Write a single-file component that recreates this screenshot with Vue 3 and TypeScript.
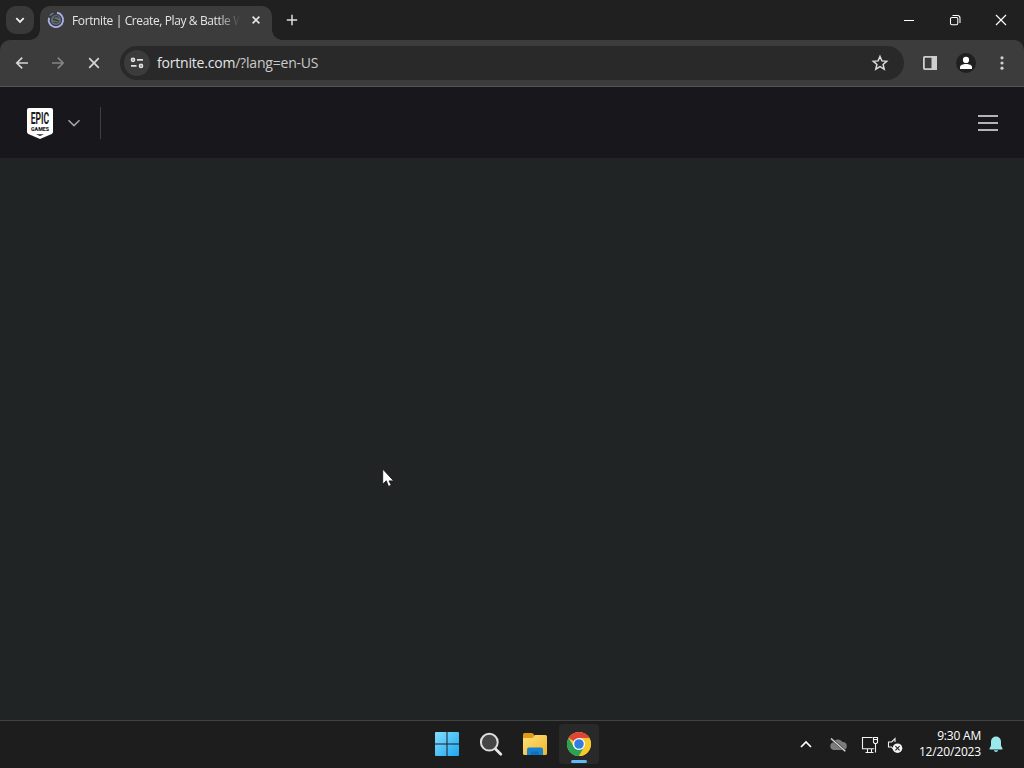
<script setup lang="ts">
import { ref } from 'vue'

const tabTitle = ref<string>('Fortnite | Create, Play & Battle W')
const host = ref<string>('fortnite.com')
const path = ref<string>('/?lang=en-US')
const time = ref<string>('9:30 AM')
const date = ref<string>('12/20/2023')
</script>

<template>
  <div class="desktop">
    <header class="tabstrip">
      <button class="tab-search" aria-label="Search tabs">
        <svg width="28" height="28" viewBox="0 0 28 28"><path d="M10.3 12.2 14 15.9l3.7-3.7" fill="none" stroke="#eee" stroke-width="1.8" /></svg>
      </button>
      <div class="tab">
        <svg class="favicon" width="18" height="18" viewBox="0 0 18 18">
          <circle cx="9" cy="9" r="5" fill="#656d75" />
          <path d="M11.800 6.500c-2.200-1.600-5-.8-5 1 0 2 4.800 1 4.600 3-.1 1.800-3.400 1.800-5 .4M6 8.500l5.700 1.300" fill="none" stroke="#30363a" stroke-width="1" />
          <path d="M10 1.800A7.200 7.200 0 1 1 2 6.800" fill="none" stroke="#a7b1ea" stroke-width="1.900" />
          <path d="M3 4.600Q4.500 2.700 6.500 2.100" fill="none" stroke="#747b9b" stroke-width="1.500" />
        </svg>
        <span class="tab-title">{{ tabTitle }}</span>
        <button class="tab-close" aria-label="Close tab">
          <svg width="16" height="16" viewBox="0 0 16 16"><path d="m4.600 4.600 6.800 6.800m0-6.800-6.800 6.800" stroke="#e4e4e4" stroke-width="1.600" /></svg>
        </button>
      </div>
      <button class="new-tab" aria-label="New tab">
        <svg width="20" height="20" viewBox="0 0 20 20"><path d="M10 4.800v10.400M4.800 10h10.400" stroke="#ddd" stroke-width="1.500" /></svg>
      </button>
      <div class="window-controls">
        <svg width="46" height="40" viewBox="0 0 46 40"><path d="M18 20.500h10" stroke="#fff" /></svg>
        <svg width="46" height="40" viewBox="0 0 46 40" fill="none" stroke="#fff" stroke-width="1.050"><rect x="18.500" y="17.500" width="7.300" height="7.300" rx="1.300" /><path d="M20.500 15.500h4.800a2.700 2.700 0 0 1 2.700 2.700v4.700" /></svg>
        <svg width="46" height="40" viewBox="0 0 46 40"><path d="m18 15 10 10m0-10L18 25" stroke="#fff" stroke-width="1.150" /></svg>
      </div>
    </header>

    <div class="toolbar-back">
      <nav class="toolbar">
        <svg width="36" height="36" viewBox="0 0 36 36" fill="none" stroke="#d5d5d5" stroke-width="1.700"><path d="M24 18H13m5.200-5.400L12.800 18l5.400 5.400" /></svg>
        <svg width="36" height="36" viewBox="0 0 36 36" fill="none" stroke="#858585" stroke-width="1.600"><path d="M12 18h11m-5.200-5.400 5.400 5.400-5.400 5.400" /></svg>
        <svg width="36" height="36" viewBox="0 0 36 36" fill="none" stroke="#d5d5d5" stroke-width="1.700"><path d="m13.200 13.200 9.600 9.600m0-9.600-9.600 9.600" /></svg>
        <div class="omnibox">
          <span class="site-info">
            <svg width="26" height="26" viewBox="0 0 26 26" fill="none" stroke="#e0e0e0" stroke-width="1.700"><circle cx="9" cy="9.800" r="1.500" /><path d="M13 9.800h6M7 15.900h5.500" /><circle cx="17" cy="15.900" r="1.500" /></svg>
          </span>
          <span class="url"><span class="host">{{ host }}</span>{{ path }}</span>
          <svg class="star" width="20" height="20" viewBox="0 0 20 20"><path d="m10 3.500 1.900 4.400 4.800.4-3.600 3.200 1.100 4.700L10 13.700l-4.200 2.500 1.100-4.700-3.600-3.200 4.800-.4Z" fill="none" stroke="#ddd" stroke-width="1.500" /></svg>
        </div>
        <svg width="36" height="36" viewBox="0 0 36 36"><rect x="11.900" y="11.900" width="12.200" height="12.200" rx=".8" fill="none" stroke="#cfcfcf" stroke-width="1.800" /><path d="M19.500 11h5.500v14h-5.500z" fill="#cfcfcf" /></svg>
        <svg width="36" height="36" viewBox="0 0 36 36"><circle cx="18" cy="18" r="10" fill="#202020" /><circle cx="18" cy="14.900" r="3.100" fill="#fff" /><path d="M12 24v-1.700c0-2.100 3-3.200 6-3.200s6 1.100 6 3.200V24Z" fill="#fff" /></svg>
        <svg width="36" height="36" viewBox="0 0 36 36" fill="#cfcfcf"><circle cx="18" cy="12.800" r="1.600" /><circle cx="18" cy="18" r="1.600" /><circle cx="18" cy="23.200" r="1.600" /></svg>
      </nav>
    </div>

    <section class="site-header">
      <svg class="epic" width="26" height="31" viewBox="0 0 26 31">
        <path d="M2 0h22q2 0 2 2v21.800q0 1.500-1.300 2.100L13 31 1.300 25.900Q0 25.300 0 23.800V2q0-2 2-2Z" fill="#fff" />
        <text class="epic-name" x="3.700" y="16" textLength="18.400" lengthAdjust="spacingAndGlyphs">EPIC</text>
        <text class="games-name" x="4" y="22.600" textLength="18" lengthAdjust="spacingAndGlyphs">GAMES</text>
        <path d="M9 26.200h8l-4 1.700Z" fill="#222" />
      </svg>
      <svg class="chevron" width="14" height="10" viewBox="0 0 14 10"><path d="m1.500 2.200 5.500 5.400 5.500-5.400" fill="none" stroke="#a5a5a8" stroke-width="1.500" /></svg>
      <span class="divider"></span>
      <button class="menu" aria-label="Menu"><span></span><span></span><span></span></button>
    </section>

    <main class="page"></main>

    <footer class="taskbar">
      <div class="apps">
        <div class="app">
          <svg width="40" height="40" viewBox="0 0 40 40">
            <defs><linearGradient id="win" x1="8" y1="8" x2="32" y2="32" gradientUnits="userSpaceOnUse"><stop stop-color="#83ddff" /><stop offset="1" stop-color="#1ca7ee" /></linearGradient></defs>
            <path d="M9 8h10.500v11.500H8V9q0-1 1-1Zm11.500 0H31q1 0 1 1v10.500H20.500ZM8 20.500h11.500V32H9q-1 0-1-1Zm12.500 0H32V31q0 1-1 1H20.500Z" fill="url(#win)" />
          </svg>
        </div>
        <div class="app">
          <svg width="40" height="40" viewBox="0 0 40 40"><path d="m24.500 25 5.300 5.300" stroke="#e7e7e7" stroke-width="2.800" stroke-linecap="round" /><circle cx="18.300" cy="18.200" r="8.400" fill="#454545" stroke="#ddd" stroke-width="2" /></svg>
        </div>
        <div class="app">
          <svg width="40" height="40" viewBox="0 0 40 40">
            <defs><linearGradient id="folder" x1="0" y1="0" x2="1" y2="1"><stop stop-color="#ffe27b" /><stop offset="1" stop-color="#efb52c" /></linearGradient></defs>
            <path d="M8 10.500Q8 9 9.500 9h7q1 0 1.700.8L20 12l-4 4H8Z" fill="#df9d16" />
            <path d="M8 14h8.500q1 0 1.700-.7L20 11h10.500q1.500 0 1.500 1.500v17q0 1.500-1.500 1.500h-21Q8 31 8 29.500Z" fill="url(#folder)" />
            <path d="M12 31v-5.500q0-2 2-2h12q2 0 2 2V31Z" fill="#1681cf" /><path d="M16 31v-2.200q0-1.300 1.300-1.300h5.400q1.300 0 1.300 1.300V31Z" fill="#0f70bd" />
          </svg>
        </div>
        <div class="app active">
          <svg width="40" height="40" viewBox="0 0 40 40">
            <circle cx="20" cy="20" r="12" fill="#f8c92d" />
            <path d="M20 20 9.600 14A12 12 0 0 1 30.400 14Z" fill="#df4537" />
            <path d="M9.600 14A12 12 0 0 0 20 32L25.200 23 20 20 14.800 23Z" fill="#2aa255" />
            <path d="M20 14h10.400A12 12 0 0 1 20 32l5.200-9Z" fill="#f8c92d" />
            <circle cx="20" cy="20" r="6.100" fill="#fff" /><circle cx="20" cy="20" r="4.800" fill="#347de0" />
          </svg>
          <span class="indicator"></span>
        </div>
      </div>
      <div class="tray">
        <svg width="32" height="40" viewBox="0 0 32 40"><path d="m11 22 5-5 5 5" fill="none" stroke="#fff" stroke-width="1.700" /></svg>
        <svg width="32" height="40" viewBox="0 0 32 40"><path d="M11.500 25a3.900 3.900 0 0 1-.4-7.600 5.500 5.500 0 0 1 9.400-.4A4 4 0 0 1 21 25Z" fill="#7c7c7c" /><path d="m9 13.500 14.300 12.700" stroke="#3d3d3d" stroke-width="2.400" /><path d="m9 13.500 14.300 12.700" stroke="#d8d8d8" stroke-width="1.200" /></svg>
        <svg width="32" height="40" viewBox="0 0 32 40" fill="none" stroke="#f3f3f3" stroke-width="1.100"><path d="M18.500 12.500h-10v11.200h11.700M11.500 27.500h8m-6-4v4m4-4v4M19.500 12.500h4v5l-1 1h-2l-1-1Zm2 6v9M19.500 14.500h4" /></svg>
        <svg class="sound" width="20" height="40" viewBox="0 0 20 40"><path d="M10 17v-3.400L6.700 17H3.500v5h3l3 3.600" fill="none" stroke="#eee" stroke-width="1.100" /><circle cx="12.500" cy="23.200" r="4.800" fill="#f4f4f4" /><path d="m10.400 21.100 4.200 4.200m0-4.200-4.200 4.200" stroke="#222" stroke-width="1.100" /></svg>
        <div class="clock"><span class="time">{{ time }}</span><span class="date">{{ date }}</span></div>
        <svg class="bell" width="14" height="17" viewBox="0 0 14 17"><path d="M7 .5a5 5 0 0 1 5 5v4l1.500 3q.4.900-.7.900H1.200q-1.100 0-.7-.9l1.500-3v-4a5 5 0 0 1 5-5ZM4.800 14.300h4.400Q8.700 16 7 16t-2.200-1.700Z" fill="#9be8ed" /></svg>
      </div>
    </footer>

    <svg class="cursor" width="14" height="20" viewBox="0 0 14 20"><path d="M.7 1v15.200l3.600-3.400 2.200 5.600 2.800-1.200L7 12.900h4.700Z" fill="#fff" stroke="#111" stroke-width=".8" /></svg>
  </div>
</template>

<style>
body { margin: 0; background: #212424; }
</style>

<style scoped>
* { box-sizing: border-box; }
svg { display: block; flex: none; }
button { display: flex; border: 0; padding: 0; background: none; }
.desktop { position: relative; display: flex; flex-direction: column; width: 1024px; height: 768px; overflow: hidden; background: #212424; font-family: "Open Sans", "Noto Sans", sans-serif; }
.tabstrip { display: flex; height: 40px; background: #1f201f; padding-left: 6px; }
.tab-search { width: 28px; height: 28px; margin-top: 6px; border-radius: 10px; background: #393939; }
.tab { position: relative; display: flex; align-items: center; width: 232px; height: 34px; margin: 6px 0 0 6px; padding: 0 8px 6px 7px; border-radius: 10px 10px 0 0; background: #3c3c3c; }
.tab::before, .tab::after { content: ""; position: absolute; bottom: 0; width: 10px; height: 10px; }
.tab::before { left: -10px; background: radial-gradient(circle at 0 0, transparent 9.500px, #3c3c3c 10px); }
.tab::after { right: -10px; background: radial-gradient(circle at 100% 0, transparent 9.500px, #3c3c3c 10px); }
.tab-title { width: 169px; margin-left: 7px; padding-top: 2px; white-space: nowrap; color: #e5e5e5; font-size: 12px; line-height: 20px; letter-spacing: -.38px; mask-image: linear-gradient(90deg, #000 146px, transparent 168px); }
.tab-close { margin-left: auto; }
.new-tab { margin: 10px 0 0 10px; }
.window-controls { display: flex; margin-left: auto; }
.toolbar-back { height: 47px; background: #1f201f; }
.toolbar { display: flex; align-items: center; height: 47px; padding: 0 4px; border-radius: 10px 10px 0 0; background: #3c3c3c; border-bottom: 1px solid #555; }
.omnibox { display: flex; align-items: center; width: 784px; height: 34px; margin: 0 8px; padding: 0 14px 0 4px; border-radius: 17px; background: #292929; }
.site-info { display: flex; align-items: center; justify-content: center; width: 26px; height: 26px; border-radius: 50%; background: #3b3b3b; }
.url { margin-left: 7px; color: #c9c9c9; font-size: 14px; line-height: 24px; letter-spacing: -.2px; white-space: nowrap; }
.host { color: #e5e5e5; }
.star { margin-left: auto; }
.site-header { display: flex; align-items: center; height: 71px; padding: 0 26px 0 27px; background: #18181c; }
.epic { margin-top: 2px; }
.epic-name { font: 700 17px "Roboto", sans-serif; fill: #1b1b1b; }
.games-name { font: 900 5.500px "Roboto", sans-serif; fill: #1b1b1b; }
.chevron { margin-left: 14px; margin-top: 1px; }
.divider { width: 1px; height: 32px; margin-left: 19px; background: #414144; }
.menu { flex-direction: column; gap: 5px; width: 20px; margin-left: auto; padding-top: 1px; }
.menu span { width: 20px; height: 2px; background: #b4b4b7; }
.page { flex: 1; background: #212424; }
.taskbar { display: grid; grid-template-columns: 176px 424px; justify-content: end; height: 48px; border-top: 1px solid #414343; background: #1d1d1d; }
.apps { display: flex; gap: 4px; padding: 3px 0 0 3px; }
.app { display: flex; flex-direction: column; flex: none; width: 40px; height: 40px; }
.active { position: relative; border-radius: 4px; background: #292929; }
.indicator { position: absolute; bottom: 1px; left: 12px; width: 16px; height: 3px; border-radius: 2px; background: #60b8f4; }
.tray { display: flex; align-items: center; padding-left: 190px; }
.sound { margin-left: -1px; }
.clock { display: flex; flex-direction: column; align-items: flex-end; width: 76px; margin-top: -2px; color: #fff; font-size: 12px; line-height: 16px; white-space: nowrap; }
.time { letter-spacing: -.2px; }
.date { letter-spacing: -.16px; }
.bell { margin-left: 8px; }
.cursor { position: absolute; left: 382px; top: 468px; }
</style>
